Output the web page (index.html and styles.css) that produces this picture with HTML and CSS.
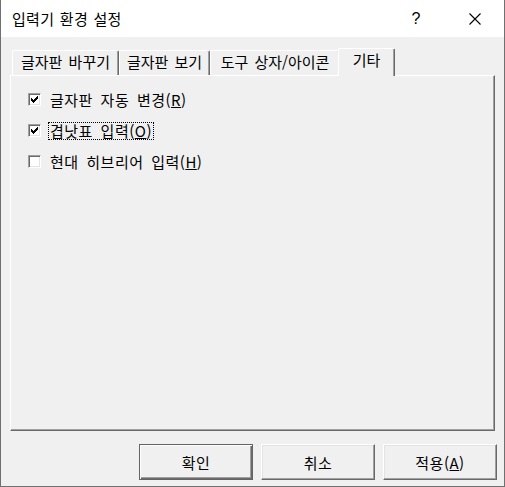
FILE: index.html
```html
<!DOCTYPE html>
<html lang="ko">
<head>
<meta charset="UTF-8" />
<title>입력기 환경 설정</title>
<link rel="stylesheet" href="styles.css">
</head>
<body>

<!-- Dialog window -->
<div class="dlgWindow">

  <!-- Title bar -->
  <div class="dlgTitleBar">
    <span class="dlgTitle">입력기 환경 설정</span>
    <span class="dlgHelp">?</span>
    <span class="dlgClose">
      <svg width="12" height="12" viewBox="0 0 12 12"><path d="M0.5 0.5 L11.5 11.5 M11.5 0.5 L0.5 11.5" stroke="#000" stroke-width="1.1" fill="none"/></svg>
    </span>
  </div>

  <div class="dlgBody">

    <!-- Tabs -->
    <div class="dlgTabs">
      <div class="dlgTab tabKbd">글자판 바꾸기</div>
      <div class="dlgTab tabView">글자판 보기</div>
      <div class="dlgTab tabTool">도구 상자/아이콘</div>
      <div class="dlgTab active tabEtc">기타</div>
    </div>

    <!-- Tab page -->
    <div class="dlgPanel">
      <div class="dlgCheckRow">
        <span class="dlgCheck">
          <svg class="dlgTick" width="7" height="7" viewBox="0 0 7 7">
            <rect x="0" y="2" width="1" height="3"/><rect x="1" y="3" width="1" height="3"/>
            <rect x="2" y="4" width="1" height="3"/><rect x="3" y="3" width="1" height="3"/>
            <rect x="4" y="2" width="1" height="3"/><rect x="5" y="1" width="1" height="3"/>
            <rect x="6" y="0" width="1" height="3"/>
          </svg>
        </span>
        <span class="dlgLabel">글자판 자동 변경(<u>R</u>)</span>
      </div>
      <div class="dlgCheckRow">
        <span class="dlgCheck">
          <svg class="dlgTick" width="7" height="7" viewBox="0 0 7 7">
            <rect x="0" y="2" width="1" height="3"/><rect x="1" y="3" width="1" height="3"/>
            <rect x="2" y="4" width="1" height="3"/><rect x="3" y="3" width="1" height="3"/>
            <rect x="4" y="2" width="1" height="3"/><rect x="5" y="1" width="1" height="3"/>
            <rect x="6" y="0" width="1" height="3"/>
          </svg>
        </span>
        <span class="dlgLabel focused">겹낫표 입력(<u>O</u>)</span>
      </div>
      <div class="dlgCheckRow">
        <span class="dlgCheck"></span>
        <span class="dlgLabel">현대 히브리어 입력(<u>H</u>)</span>
      </div>
    </div>

    <!-- Buttons -->
    <div class="dlgButtons">
      <button class="dlgBtn default">확인</button>
      <button class="dlgBtn">취소</button>
      <button class="dlgBtn">적용(<u>A</u>)</button>
    </div>

  </div>
</div>

</body>
</html>
```

FILE: styles.css
```css
/* Page */
body {
  margin: 0;
  background: #ffffff;
  font-family: "Noto Sans CJK KR", "Liberation Sans", sans-serif;
  color: #000000;
}

/* Dialog window */
.dlgWindow {
  width: 505px;
  height: 487px;
  box-sizing: border-box;
  background: #f0f0f0;
  border-left: 1px solid #707070;
  border-right: 1px solid #707070;
  border-bottom: 1px solid #707070;
  display: flex;
  flex-direction: column;
}

/* Title bar */
.dlgTitleBar {
  height: 37px;
  background: #ffffff;
  display: flex;
  align-items: center;
  padding-left: 11px;
}

.dlgTitle {
  flex: 1;
  font-size: 15px;
  letter-spacing: 0.3px;
  word-spacing: 1px;
  line-height: 20px;
}

.dlgHelp {
  width: 46px;
  margin-right: 13px;
  text-align: center;
  font-family: "Liberation Sans", sans-serif;
  font-size: 16px;
}

.dlgClose {
  width: 46px;
  margin-right: 6px;
  display: flex;
  justify-content: center;
}

/* Body */
.dlgBody {
  flex: 1;
  padding: 11px 9px 0 9px;
  display: flex;
  flex-direction: column;
}

/* Tabs */
.dlgTabs {
  height: 27px;
  display: flex;
  align-items: flex-end;
  padding-left: 2px;
  position: relative;
  z-index: 1;
}

.dlgTab {
  height: 25px;
  box-sizing: border-box;
  border-top: 1px solid #ffffff;
  border-left: 1px solid #ffffff;
  border-right: 1px solid #696969;
  box-shadow: inset -1px 0 0 #a0a0a0;
  border-radius: 2px 2px 0 0;
  font-size: 15px;
  letter-spacing: 0;
  word-spacing: 2px;
  line-height: 22px;
  text-align: center;
  white-space: nowrap;
  background: #f0f0f0;
}

.tabKbd { width: 107px; }
.tabView { width: 91px; }
.tabTool { width: 130px; }

.dlgTab.active {
  width: 57px;
  height: 28px;
  margin-left: -2px;
  margin-bottom: -1px;
  line-height: 22px;
  position: relative;
}

/* Tab page */
.dlgPanel {
  height: 356px;
  box-sizing: border-box;
  border-top: 1px solid #ffffff;
  border-left: 1px solid #ffffff;
  border-right: 1px solid #696969;
  border-bottom: 1px solid #696969;
  box-shadow: inset -1px -1px 0 #a0a0a0;
  padding: 14px 0 0 17px;
  display: flex;
  flex-direction: column;
  gap: 12px;
}

.dlgCheckRow {
  height: 19px;
  display: flex;
  align-items: center;
}

.dlgCheck {
  width: 13px;
  height: 13px;
  box-sizing: border-box;
  background: #ffffff;
  border-top: 1px solid #a0a0a0;
  border-left: 1px solid #a0a0a0;
  border-right: 1px solid #ffffff;
  border-bottom: 1px solid #ffffff;
  box-shadow: inset 1px 1px 0 #696969, inset -1px -1px 0 #e3e3e3;
  display: flex;
  align-items: center;
  justify-content: center;
}

.dlgTick {
  display: block;
  fill: #000000;
  shape-rendering: crispEdges;
}

.dlgLabel {
  margin-left: 7px;
  padding: 0 1px;
  font-size: 15px;
  letter-spacing: 0.5px;
  word-spacing: 3px;
  line-height: 16px;
  border: 1px dotted transparent;
}

.dlgLabel.focused {
  border-color: #000000;
}

.dlgLabel u,
.dlgBtn u {
  text-underline-offset: 1px;
}

/* Buttons */
.dlgButtons {
  margin-top: 13px;
  margin-right: -2px;
  display: flex;
  justify-content: flex-end;
  gap: 8px;
}

.dlgBtn {
  width: 114px;
  height: 36px;
  box-sizing: border-box;
  background: #f0f0f0;
  border: 1px solid;
  border-color: #ffffff #696969 #696969 #ffffff;
  box-shadow: inset -1px -1px 0 #a0a0a0, inset 1px 1px 0 #e3e3e3;
  font-family: "Noto Sans CJK KR", "Liberation Sans", sans-serif;
  font-size: 15px;
  letter-spacing: 0.5px;
  color: #000000;
  padding: 0;
}

.dlgBtn.default {
  border-color: #646464;
  box-shadow: inset 1px 1px 0 #ffffff, inset -1px -1px 0 #696969, inset -2px -2px 0 #a0a0a0;
}
```
